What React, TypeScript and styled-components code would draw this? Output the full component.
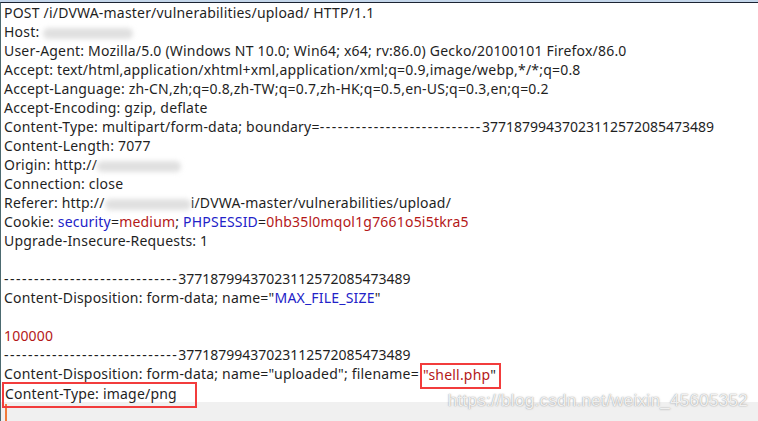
import React from "react";
import styled, { createGlobalStyle } from "styled-components";

const Global = createGlobalStyle`
  html, body { margin: 0; padding: 0; background: #ffffff; }
  body { width: 758px; height: 421px; overflow: hidden; }
`;

const Frame = styled.div`
  position: relative;
  width: 758px;
  height: 421px;
  display: flex;
  flex-direction: column;
  background: #f0f0f0;
  border-top: 2px solid #c4d6ea;
  box-sizing: border-box;
  font-family: "Noto Sans", "Open Sans", sans-serif;
  font-size: 14px;
  letter-spacing: 0.2px;
  color: #1f1f1f;
`;

const Editor = styled.div`
  display: flex;
  flex-direction: column;
  height: 400px;
  box-sizing: border-box;
  background: #ffffff;
  border-top: 1px solid #1c2433;
  border-left: 1px solid #4c6a70;
  padding: 0 0 0 3px;
`;

const Line = styled.div`
  height: 19px;
  line-height: 19px;
  white-space: pre;
`;

const Key = styled.span`
  color: #2222c8;
`;

const Val = styled.span`
  color: #b41818;
`;

const Dashes = styled.span`
  letter-spacing: 1.5px;
`;

const Digits = styled.span`
  letter-spacing: 0;
`;

const Blur = styled.span<{ $w: number }>`
  display: inline-block;
  width: ${(p) => p.$w}px;
  height: 11px;
  vertical-align: middle;
  background: #e0e0e0;
  border-radius: 6px;
  filter: blur(2.5px);
`;

const Marked = styled.span<{ $w: number; $shift?: number }>`
  display: inline-block;
  vertical-align: top;
  position: relative;
  z-index: 2;
  width: ${(p) => p.$w}px;
  height: 26px;
  line-height: 19px;
  box-sizing: border-box;
  border: 2px solid #f23c3c;
  margin: -1px 0 0 ${(p) => p.$shift ?? -2}px;
  padding: 0 0 0 1px;
`;

const Bottom = styled.div`
  flex: 1;
  background: #f0f0f0;
  border-left: 1px solid #4c6a70;
  position: relative;
`;

const Caret = styled.div`
  position: absolute;
  left: 4px;
  top: 2px;
  bottom: 0;
  width: 2px;
  background: #f07a3a;
`;

const Watermark = styled.div`
  position: absolute;
  right: 10px;
  bottom: 10px;
  font-family: "Liberation Sans", Arial, sans-serif;
  font-size: 17px;
  letter-spacing: 0.3px;
  color: rgba(255, 255, 255, 0.85);
  text-shadow: 0 0 1px rgba(120, 120, 120, 0.7), 0 0 2px rgba(150, 150, 150, 0.5);
`;

const DIGITS = "37718799437023112572085473489";

function Boundary({ n }: { n: number }) {
  return (
    <>
      <Dashes>{"-".repeat(n)}</Dashes>
      <Digits>{DIGITS}</Digits>
    </>
  );
}

export default function App() {
  return (
    <>
      <Global />
      <Frame>
        <Editor>
          <Line>POST /i/DVWA-master/vulnerabilities/upload/ HTTP/1.1</Line>
          <Line>Host: <Blur $w={90} /></Line>
          <Line>User-Agent: Mozilla/5.0 (Windows NT 10.0; Win64; x64; rv:86.0) Gecko/20100101 Firefox/86.0</Line>
          <Line>Accept: text/html,application/xhtml+xml,application/xml;q=0.9,image/webp,*/*;q=0.8</Line>
          <Line>Accept-Language: zh-CN,zh;q=0.8,zh-TW;q=0.7,zh-HK;q=0.5,en-US;q=0.3,en;q=0.2</Line>
          <Line>Accept-Encoding: gzip, deflate</Line>
          <Line>Content-Type: multipart/form-data; boundary=<Boundary n={27} /></Line>
          <Line>Content-Length: 7077</Line>
          <Line>Origin: http://<Blur $w={84} /></Line>
          <Line>Connection: close</Line>
          <Line>Referer: http://<Blur $w={86} />i/DVWA-master/vulnerabilities/upload/</Line>
          <Line>
            Cookie: <Key>security</Key>=<Val>medium</Val>; <Key>PHPSESSID</Key>=<Val>0hb35l0mqol1g7661o5i5tkra5</Val>
          </Line>
          <Line>Upgrade-Insecure-Requests: 1</Line>
          <Line> </Line>
          <Line><Boundary n={29} /></Line>
          <Line>Content-Disposition: form-data; name="<Key>MAX_FILE_SIZE</Key>"</Line>
          <Line> </Line>
          <Line><Val>100000</Val></Line>
          <Line><Boundary n={29} /></Line>
          <Line>
            Content-Disposition: form-data; name="uploaded"; filename=<Marked $w={81} $shift={1}><Val>"shell.php</Val>"</Marked>
          </Line>
          <Line>
            <Marked $w={195}>Content-Type: image/png</Marked>
          </Line>
        </Editor>
        <Bottom>
          <Caret />
          <Watermark>https://blog.csdn.net/weixin_45605352</Watermark>
        </Bottom>
      </Frame>
    </>
  );
}
